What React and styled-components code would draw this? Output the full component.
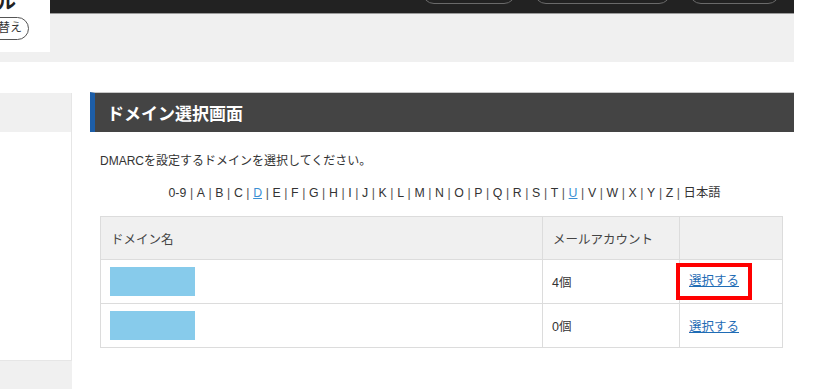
import React from 'react';
import styled, { createGlobalStyle } from 'styled-components';

const GlobalStyle = createGlobalStyle`
  html, body {
    margin: 0;
    padding: 0;
    background: #fff;
    overflow: hidden;
  }
  body {
    font-family: "Liberation Sans", "Noto Sans CJK JP", sans-serif;
    color: #333;
  }
`;

const Page = styled.div`
  width: 827px;
  height: 389px;
  overflow: hidden;
  display: flex;
  flex-direction: column;
`;

const TopArea = styled.div`
  width: 794px;
  height: 62px;
  background: #f0f0f0;
  display: flex;
  align-items: flex-start;
  flex-shrink: 0;
`;

const LogoBox = styled.div`
  width: 50px;
  height: 52px;
  background: #fff;
  overflow: hidden;
  display: flex;
  flex-direction: column;
  align-items: flex-end;
`;

const LogoText = styled.div`
  margin-top: -8px;
  margin-right: 34px;
  font-size: 19px;
  font-weight: bold;
  line-height: 22px;
  color: #222;
`;

const SwitchButton = styled.div`
  margin-top: 3px;
  margin-right: 21px;
  height: 21px;
  padding: 0 6px 0 14px;
  border: 1px solid #555;
  border-radius: 12px;
  font-size: 12px;
  line-height: 21px;
  color: #333;
  white-space: nowrap;
`;

const DarkBar = styled.div`
  flex: 1;
  height: 13px;
  background: #222;
  border-bottom: 1px solid #9a9a9a;
  display: flex;
  justify-content: flex-end;
  gap: 18px;
  padding-right: 14px;
  overflow: hidden;
`;

const NavPill = styled.div`
  width: ${p => p.$w}px;
  height: 30px;
  margin-top: -26px;
  box-sizing: border-box;
  border: 1px solid #6a6a6a;
  border-radius: 12px;
`;

const Body = styled.div`
  display: flex;
  margin-top: 31px;
  flex: 1;
`;

const Sidebar = styled.div`
  width: 72px;
  display: flex;
  flex-direction: column;
  background: #f0f0f0;
`;

const SideHead = styled.div`
  height: 39px;
  background: #f0f0f0;
  border-right: 1px solid #e6e6e6;
`;

const SideList = styled.div`
  height: 228px;
  background: #fff;
  border-right: 1px solid #e6e6e6;
  border-bottom: 1px solid #e6e6e6;
`;

const Main = styled.div`
  width: 704px;
  margin-left: 18px;
`;

const PanelHead = styled.h2`
  margin: -1px 0 0;
  height: 39px;
  box-sizing: content-box;
  background: #444;
  border-top: 1px solid #c8c8c8;
  border-left: 5px solid #1d5ea8;
  padding-left: 12px;
  color: #fff;
  font-size: 17px;
  font-weight: bold;
  line-height: 39px;
  font-family: "Noto Sans CJK JP", sans-serif;
`;

const Content = styled.div`
  padding: 21px 11px 0 10px;
`;

const Lead = styled.p`
  margin: 0;
  font-size: 12px;
  line-height: 17px;
`;

const IndexLine = styled.div`
  margin-top: 15px;
  text-align: center;
  font-size: 12.3px;
  line-height: 17px;
  color: #333;
  padding-left: 6px;
`;

const Sep = styled.span`
  color: #555;
  margin: 0 3.6px;
`;

const IndexLink = styled.a`
  color: #3b8fd3;
  text-decoration: underline;
`;

const Table = styled.table`
  margin-top: 14px;
  width: 100%;
  table-layout: fixed;
  border-collapse: collapse;
  font-size: 12.5px;
`;

const Th = styled.th`
  background: #f0f0f0;
  border: 1px solid #dcdcdc;
  height: 42px;
  padding: 0 10px;
  text-align: left;
  font-weight: normal;
  color: #444;
  width: ${p => p.$w || 'auto'};
`;

const Td = styled.td`
  border: 1px solid #dcdcdc;
  height: 43px;
  padding: 0 9px;
  font-size: 12.5px;
  color: #333;
`;

const Masked = styled.div`
  width: 85px;
  height: 29px;
  background: #87cbeb;
`;

const SelectLink = styled.a`
  color: #1f6cb5;
  text-decoration: underline;
  font-size: 12.5px;
  cursor: pointer;
`;

const Highlight = styled.span`
  display: inline-block;
  border: 4px solid #f00;
  padding: 6px 9px;
  margin: -10px -13px;
  line-height: 17px;
`;

const letters = ['A','B','C','D','E','F','G','H','I','J','K','L','M','N','O','P','Q','R','S','T','U','V','W','X','Y','Z'];
const linked = ['D', 'U'];

const rows = [
  { count: '4個', highlight: true },
  { count: '0個', highlight: false },
];

export default function App() {
  return (
    <Page>
      <GlobalStyle />
      <TopArea>
        <LogoBox>
          <LogoText>ル</LogoText>
          <SwitchButton>替え</SwitchButton>
        </LogoBox>
        <DarkBar>
          <NavPill $w={94} />
          <NavPill $w={137} />
          <NavPill $w={91} />
        </DarkBar>
      </TopArea>

      <Body>
        <Sidebar>
          <SideHead />
          <SideList />
        </Sidebar>

        <Main>
          <PanelHead>ドメイン選択画面</PanelHead>
          <Content>
            <Lead>DMARCを設定するドメインを選択してください。</Lead>
            <IndexLine>
              0-9
              {letters.map(l => (
                <React.Fragment key={l}>
                  <Sep>|</Sep>
                  {linked.includes(l) ? <IndexLink>{l}</IndexLink> : l}
                </React.Fragment>
              ))}
              <Sep>|</Sep>日本語
            </IndexLine>

            <Table>
              <colgroup>
                <col />
                <col style={{ width: '137px' }} />
                <col style={{ width: '103px' }} />
              </colgroup>
              <thead>
                <tr>
                  <Th>ドメイン名</Th>
                  <Th>メールアカウント</Th>
                  <Th></Th>
                </tr>
              </thead>
              <tbody>
                {rows.map((r, i) => (
                  <tr key={i}>
                    <Td><Masked /></Td>
                    <Td>{r.count}</Td>
                    <Td>
                      {r.highlight ? (
                        <Highlight><SelectLink>選択する</SelectLink></Highlight>
                      ) : (
                        <SelectLink>選択する</SelectLink>
                      )}
                    </Td>
                  </tr>
                ))}
              </tbody>
            </Table>
          </Content>
        </Main>
      </Body>
    </Page>
  );
}
